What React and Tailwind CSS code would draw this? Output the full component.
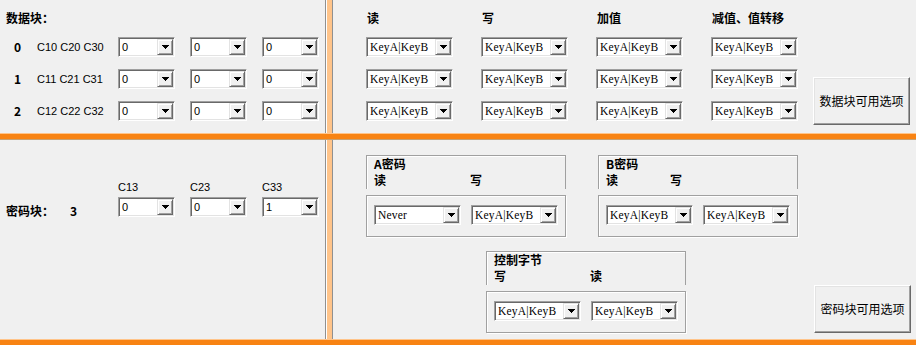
import React from 'react';

const cjk = '"Noto Sans CJK SC", "Liberation Sans", sans-serif';

// 下拉框（经典 Win 风格凹陷边框）
const Combo = ({ value, wide, serif }) => (
  <div
    className={`flex h-[20px] shrink-0 border border-t-[#a0a0a0] border-l-[#a0a0a0] border-b-white border-r-white bg-white p-[1px] shadow-[inset_1px_1px_0_#696969,inset_-1px_-1px_0_#e3e3e3] ${
      wide ? 'w-[87px]' : 'w-[57px]'
    }`}
  >
    <div
      className={`flex-1 whitespace-nowrap pl-[2px] leading-[16px] text-black ${
        serif ? 'text-[11.5px] tracking-[0.2px]' : 'text-[11px]'
      }`}
      style={{
        fontFamily: serif
          ? '"Liberation Serif", serif'
          : '"Liberation Sans", sans-serif',
      }}
    >
      {value}
    </div>
    <div className="flex h-[16px] w-[16px] items-center justify-center border border-t-[#e3e3e3] border-l-[#e3e3e3] border-r-[#696969] border-b-[#696969] bg-[#f0f0f0] shadow-[inset_1px_1px_0_white,inset_-1px_-1px_0_#a0a0a0]">
      <svg width="7" height="4" viewBox="0 0 7 4" shapeRendering="crispEdges">
        <polygon points="0,0 7,0 3.5,4" fill="black" />
      </svg>
    </div>
  </div>
);

const Button = ({ children }) => (
  <div
    className="flex h-[48px] w-[97px] shrink-0 items-center justify-center whitespace-nowrap border border-t-white border-l-white border-r-[#696969] border-b-[#696969] bg-[#f0f0f0] text-[12px] text-black shadow-[inset_-1px_-1px_0_#a0a0a0,inset_1px_1px_0_#e3e3e3]"
    style={{ fontFamily: cjk }}
  >
    {children}
  </div>
);

const VDivider = () => (
  <div className="flex h-full w-[8px] shrink-0">
    <div className="w-[1px] bg-[#909090]" />
    <div className="w-[1px] bg-white" />
    <div className="w-[5px] bg-[#ffc48a]" />
    <div className="w-[1px] bg-[#909090]" />
  </div>
);

// 分组框：上方标题框 + 下方选项框
const Group = ({ title, labels, children }) => (
  <div className="flex w-[200px] shrink-0 flex-col">
    <div className="h-[34px] border border-b-0 border-[#a0a0a0] pl-[7px] shadow-[inset_1px_1px_0_white]">
      <div className="h-[16px] text-[12px] font-bold leading-[16px]">{title}</div>
      <div className="flex h-[16px] text-[12px] font-bold leading-[16px]">
        <span className={labels[1]}>{labels[0]}</span>
        <span>{labels[2]}</span>
      </div>
    </div>
    <div className="mt-[6px] flex h-[42px] gap-[10px] border border-[#a0a0a0] pl-[7px] pt-[9px] shadow-[inset_1px_1px_0_white,1px_1px_0_white]">
      {children}
    </div>
  </div>
);

const rows = [
  { n: '0', c: 'C10 C20 C30' },
  { n: '1', c: 'C11 C21 C31' },
  { n: '2', c: 'C12 C22 C32' },
];

const heads = ['读', '写', '加值', '减值、值转移'];

export default function App() {
  return (
    <div
      className="flex h-[345px] w-[916px] flex-col overflow-hidden bg-[#f0f0f0] text-black"
      style={{ fontFamily: cjk }}
    >
      {/* 数据块 */}
      <div className="flex h-[133px] shrink-0">
        <div className="w-[325px] shrink-0 pl-[6px] pt-[11px]">
          <div className="text-[12px] font-bold leading-[14px]">数据块：</div>
          <div className="mt-[12px] flex flex-col gap-[12px]">
            {rows.map((r) => (
              <div key={r.n} className="flex h-[20px] items-center pl-[8px]">
                <span className="w-[23px] text-[12px] font-bold">{r.n}</span>
                <span
                  className="w-[81px] text-[11px]"
                  style={{ fontFamily: '"Liberation Sans", sans-serif' }}
                >
                  {r.c}
                </span>
                <div className="flex gap-[15px]">
                  <Combo value="0" />
                  <Combo value="0" />
                  <Combo value="0" />
                </div>
              </div>
            ))}
          </div>
        </div>
        <VDivider />
        <div className="flex flex-1 items-start pl-[33px] pt-[11px]">
          <div className="grid grid-cols-[115px_115px_115px_87px]">
            {heads.map((h) => (
              <div
                key={h}
                className="whitespace-nowrap pl-[1px] text-[12px] font-bold leading-[14px]"
              >
                {h}
              </div>
            ))}
            {[0, 1, 2].map((r) =>
              heads.map((h) => (
                <div key={`${r}-${h}`} className="mt-[12px]">
                  <Combo value="KeyA|KeyB" wide serif />
                </div>
              ))
            )}
          </div>
          <div className="ml-[15px] mt-[66px]">
            <Button>数据块可用选项</Button>
          </div>
        </div>
      </div>

      {/* 横向分隔 */}
      <div className="h-[1px] shrink-0 bg-[#ffc48a]" />
      <div className="h-[5px] shrink-0 bg-[#f88313]" />
      <div className="h-[1px] shrink-0 bg-[#c8a070]" />

      {/* 密码块 */}
      <div className="flex h-[199px] shrink-0">
        <div className="flex w-[325px] shrink-0 pl-[6px] pt-[41px]">
          <div className="flex w-[112px] items-start pt-[23px] text-[12px] font-bold leading-[14px]">
            <span>密码块：</span>
            <span className="ml-[16px]">3</span>
          </div>
          <div className="flex gap-[15px]">
            {[
              ['C13', '0'],
              ['C23', '0'],
              ['C33', '1'],
            ].map(([l, v]) => (
              <div key={l} className="flex flex-col">
                <span
                  className="mb-[4px] h-[12px] text-[11px] leading-[12px]"
                  style={{ fontFamily: '"Liberation Sans", sans-serif' }}
                >
                  {l}
                </span>
                <Combo value={v} />
              </div>
            ))}
          </div>
        </div>
        <VDivider />
        <div className="flex flex-1 flex-col pl-[33px] pt-[15px]">
          <div className="flex gap-[32px]">
            <Group title="A密码" labels={['读', 'w-[96px]', '写']}>
              <Combo value="Never" wide serif />
              <Combo value="KeyA|KeyB" wide serif />
            </Group>
            <Group title="B密码" labels={['读', 'w-[64px]', '写']}>
              <Combo value="KeyA|KeyB" wide serif />
              <Combo value="KeyA|KeyB" wide serif />
            </Group>
          </div>
          <div className="mt-[14px] flex items-start">
            <div className="ml-[120px]">
              <Group title="控制字节" labels={['写', 'w-[96px]', '读']}>
                <Combo value="KeyA|KeyB" wide serif />
                <Combo value="KeyA|KeyB" wide serif />
              </Group>
            </div>
            <div className="ml-[128px] mt-[34px]">
              <Button>密码块可用选项</Button>
            </div>
          </div>
        </div>
      </div>

      <div className="h-[1px] shrink-0 bg-[#ffc48a]" />
      <div className="flex-1 bg-[#f88313]" />
    </div>
  );
}
